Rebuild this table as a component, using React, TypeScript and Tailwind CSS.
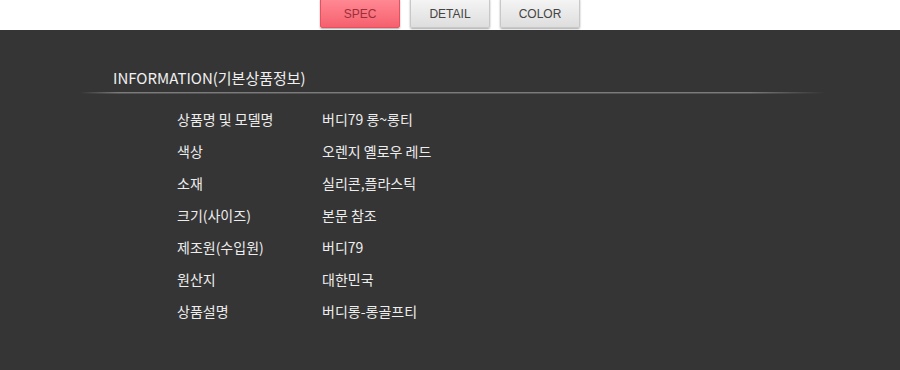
const tabs = ["SPEC", "DETAIL", "COLOR"];

const rows: [string, string][] = [
  ["상품명 및 모델명", "버디79 롱~롱티"],
  ["색상", "오렌지 옐로우 레드"],
  ["소재", "실리콘,플라스틱"],
  ["크기(사이즈)", "본문 참조"],
  ["제조원(수입원)", "버디79"],
  ["원산지", "대한민국"],
  ["상품설명", "버디롱-롱골프티"],
];

const font = {
  fontFamily: '"Noto Sans CJK KR", "Noto Sans", sans-serif',
};

export default function App() {
  return (
    <div className="w-[900px] h-[370px] bg-white" style={font}>
      <div className="h-[30px] flex justify-center gap-[10px] font-['Liberation_Sans',sans-serif]">
        {tabs.map((t, i) => (
          <div
            key={t}
            className={
              i === 0
                ? "w-[80px] h-[29px] -mt-px rounded-b-[2px] border border-[#e8505f] bg-gradient-to-b from-[#ff8893] to-[#f5606e] shadow-[0_1px_2px_rgba(0,0,0,0.35)] flex items-center justify-center text-[12px] text-[#9a2f3c]"
                : "w-[80px] h-[29px] -mt-px rounded-b-[2px] border border-[#c8c8c8] bg-gradient-to-b from-[#f4f4f4] to-[#dedede] shadow-[0_1px_2px_rgba(0,0,0,0.35)] flex items-center justify-center text-[12px] text-[#444]"
            }
          >
            {t}
          </div>
        ))}
      </div>
      <div className="h-[340px] bg-[#353535] pt-[38px]">
        <div className="pl-[113px] text-[15px] leading-[20px] text-[#f0f0f0]">
          INFORMATION(기본상품정보)
        </div>
        {/* divider: bright middle, fading at both ends */}
        <div className="mt-[4px] mx-[80px] w-[745px]">
          <div className="h-px bg-[linear-gradient(to_right,transparent,#7a7a7a_5%,#7a7a7a_90%,transparent)]" />
          <div className="h-px bg-[linear-gradient(to_right,transparent,#555_5%,#555_90%,transparent)]" />
        </div>
        <div className="pt-[9px] pl-[177px] flex flex-col text-[14px] leading-[32px] text-[#ededed]">
          {rows.map(([k, v]) => (
            <div key={k} className="flex">
              <span className="w-[145px]">{k}</span>
              <span>{v}</span>
            </div>
          ))}
        </div>
      </div>
    </div>
  );
}
